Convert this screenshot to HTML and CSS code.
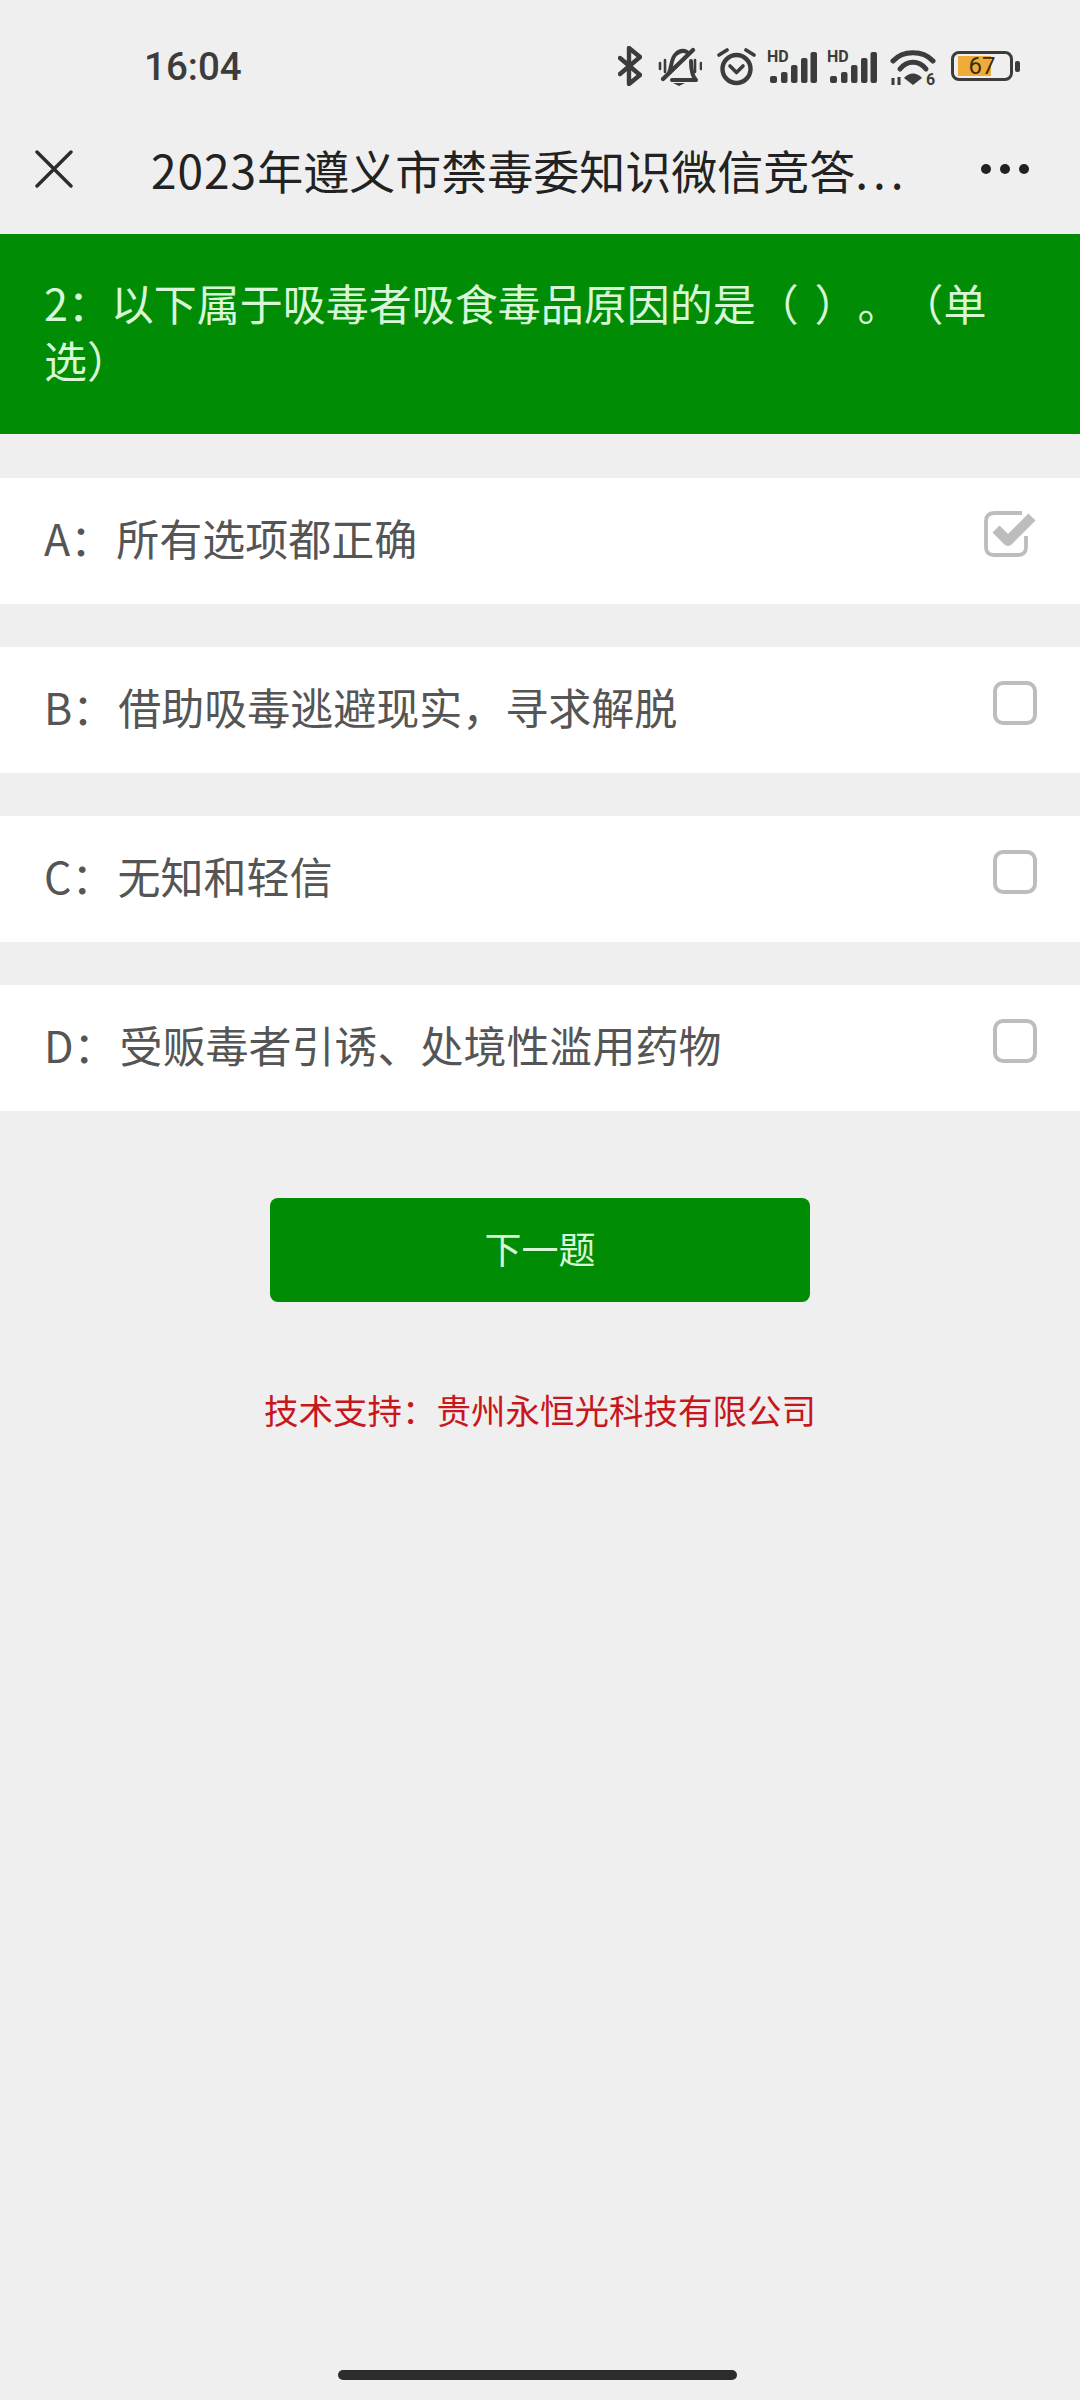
FILE: index.html
```html
<!DOCTYPE html>
<html lang="zh">
<head>
<meta charset="utf-8">
<title>2023年遵义市禁毒委知识微信竞答</title>
<link rel="stylesheet" href="styles.css">
</head>
<body>
<div class="screen">
  <div class="status">
    <span class="time">16:04</span>
    <div class="status-icons">
      <svg class="ic" width="24" height="40" viewBox="0 0 24 40"><path d="M2 12 L22 29 L11 38 V2 L22 11 L2 28" fill="none" stroke="#3c3c3c" stroke-width="4.4" stroke-linejoin="round" stroke-linecap="round"/></svg>
      <svg class="ic ic-bell" width="44" height="40" viewBox="0 0 44 40"><g fill="none" stroke="#3c3c3c" stroke-linecap="round" stroke-linejoin="round"><path d="M11 27 C14 20 13 12 18 8 C21 5 25 4 29 6" stroke-width="4"/><path d="M33 15 C33 24 34 30 38 34 H14" stroke-width="4"/><path d="M5 33 L35 4" stroke-width="4.4"/><path d="M2 17 V23 M7 14 V26 M37 14 V26 M43 17 V23" stroke-width="2.6"/></g><path d="M15 37 H27 L21 40 Z" fill="#3c3c3c"/></svg>
      <svg class="ic ic-alarm" width="39" height="40" viewBox="0 0 39 40"><g fill="none" stroke="#3c3c3c" stroke-linecap="round" stroke-linejoin="round"><circle cx="19.5" cy="23" r="14" stroke-width="4.4"/><path d="M13 20 L19.5 26.5 L26 20" stroke-width="3.6"/><path d="M2 9 L10 4 M29 4 L37 9" stroke-width="3.6"/></g></svg>
      <svg class="ic ic-sig" width="50" height="40" viewBox="0 0 50 40"><text class="hd" x="0" y="16">HD</text><g fill="#3c3c3c"><rect x="3" y="30" width="7" height="7" rx="2"/><rect x="14" y="26" width="6.5" height="11" rx="2"/><rect x="24" y="19" width="6.5" height="18" rx="2"/><rect x="34" y="12" width="6.5" height="25" rx="2"/><rect x="43.5" y="6" width="6.5" height="31" rx="2"/></g></svg>
      <svg class="ic ic-sig2" width="50" height="40" viewBox="0 0 50 40"><text class="hd" x="0" y="16">HD</text><g fill="#3c3c3c"><rect x="3" y="30" width="7" height="7" rx="2"/><rect x="14" y="26" width="6.5" height="11" rx="2"/><rect x="24" y="19" width="6.5" height="18" rx="2"/><rect x="34" y="12" width="6.5" height="25" rx="2"/><rect x="43.5" y="6" width="6.5" height="31" rx="2"/></g></svg>
      <svg class="ic ic-wifi" width="46" height="40" viewBox="0 0 46 40"><g fill="none" stroke="#3c3c3c" stroke-width="5" stroke-linecap="round"><path d="M3 15 C13 4 33 4 43 15"/><path d="M10 23 C17 14 29 14 36 23"/></g><path d="M14 32 C19 26 27 26 32 32 L23 39 Z" fill="#3c3c3c"/><path d="M3 32 v7 M9 31 v8" stroke="#3c3c3c" stroke-width="3"/><text class="wifi6" x="36" y="39">6</text></svg>
      <div class="battery-wrap">
        <div class="battery"><div class="battery-fill"></div><span class="battery-num">67</span></div>
        <div class="battery-cap"></div>
      </div>
    </div>
  </div>
  <div class="nav">
    <svg class="nav-close" width="38" height="38" viewBox="0 0 38 38"><path d="M2 2 L36 36 M36 2 L2 36" stroke="#2c2c2c" stroke-width="3.4" stroke-linecap="round"/></svg>
    <div class="nav-title"><span class="nav-year">2023</span>年遵义市禁毒委知识微信竞答<span class="nav-dots">...</span></div>
    <div class="nav-more"><i></i><i></i><i></i></div>
  </div>
  <div class="question">2：以下属于吸毒者吸食毒品原因的是（ ）。（单选）</div>
  <div class="options">
    <div class="option"><span><span class="opt-key">A：</span>所有选项都正确</span>
      <svg class="check check-on" width="54" height="46" viewBox="0 0 54 46"><path d="M38 2 H10 Q2 2 2 10 V36 Q2 44 10 44 H34 Q42 44 42 36 V25" fill="none" stroke="#bdbdbd" stroke-width="3.8"/><path d="M12 18 L24 30 L48 6" fill="none" stroke="#bdbdbd" stroke-width="10" stroke-linejoin="round"/></svg>
    </div>
    <div class="option"><span><span class="opt-key">B：</span>借助吸毒逃避现实，寻求解脱</span><div class="check-box"></div></div>
    <div class="option"><span><span class="opt-key">C：</span>无知和轻信</span><div class="check-box"></div></div>
    <div class="option"><span><span class="opt-key">D：</span>受贩毒者引诱、处境性滥用药物</span><div class="check-box"></div></div>
  </div>
  <div class="next">下一题</div>
  <div class="support">技术支持：贵州永恒光科技有限公司</div>
  <div class="home-bar"></div>
</div>
</body>
</html>
```
FILE: styles.css
```css
* { box-sizing: border-box; }
html, body { margin: 0; padding: 0; }
body { background: #efefef; font-family: "Noto Sans CJK SC", "Noto Sans", sans-serif; }
.screen { width: 1080px; height: 2400px; display: flex; flex-direction: column; position: relative; overflow: hidden; background: #efefef; text-spacing-trim: space-all; }
.status { height: 104px; padding: 28px 60px 0 144px; display: flex; align-items: center; justify-content: space-between; flex: none; }
.time { font-family: Roboto, sans-serif; font-weight: 500; font-size: 38.5px; color: #3c3c3c; }
.status-icons { display: flex; align-items: center; gap: 16px; }
.ic { display: block; }
.ic-alarm { margin-left: -1px; }
.ic-sig { margin-left: -5px; }
.ic-sig2 { margin-left: -6px; }
.ic-wifi { margin-left: -3px; }
.hd { font-family: Roboto, sans-serif; font-weight: 700; font-size: 16px; fill: #3c3c3c; }
.wifi6 { font-family: Roboto, sans-serif; font-weight: 700; font-size: 16px; fill: #3c3c3c; }
.battery-wrap { display: flex; align-items: center; gap: 2px; margin-left: -1px; }
.battery { width: 62px; height: 30px; border: 3px solid #3c3c3c; border-radius: 8px; position: relative; display: flex; align-items: center; justify-content: center; overflow: hidden; }
.battery-fill { position: absolute; left: 4px; top: 2px; bottom: 2px; width: 33px; background: #f0ac3a; }
.battery-num { position: relative; font-family: Roboto, sans-serif; font-size: 24px; line-height: 24px; color: #3a2c10; }
.battery-cap { width: 5px; height: 11px; background: #3c3c3c; border-radius: 2px; }
.nav { height: 130px; flex: none; display: flex; align-items: center; padding: 0 51px 0 35px; }
.nav-close { flex: none; }
.nav-title { margin-left: 78px; font-size: 46px; color: #222; white-space: nowrap; flex: 1; }
.nav-year { letter-spacing: 1px; }
.nav-dots { letter-spacing: 5px; }
.nav-more { display: flex; gap: 9px; }
.nav-more i { display: block; width: 10px; height: 10px; border-radius: 50%; background: #222; }
.question { height: 200px; flex: none; background: #008c05; color: #d8f7d6; font-size: 43px; line-height: 57px; word-spacing: 6px; padding: 40px 60px 0 44px; }
.options { display: flex; flex-direction: column; gap: 43px; margin-top: 44px; }
.option { height: 126px; background: #fff; display: flex; align-items: center; justify-content: space-between; padding: 0 43px 8px 44px; color: #555; font-size: 43px; position: relative; }
.opt-key { margin-right: 3px; }
.check-box { width: 44px; height: 44px; border: 4px solid #bdbdbd; border-radius: 10px; position: relative; top: -3px; }
.check-on { position: relative; top: -3px; margin-right: -1px; }
.next { align-self: center; width: 540px; height: 104px; margin-top: 87px; padding-bottom: 4px; background: #008c05; border-radius: 8px; color: #d8f7d6; font-size: 37px; display: flex; align-items: center; justify-content: center; }
.support { margin-top: 83px; text-align: center; color: #c8161d; font-size: 34.5px; line-height: 48px; }
.home-bar { position: absolute; left: 338px; top: 2370px; width: 399px; height: 10px; border-radius: 5px; background: #2c2c2c; }
```
